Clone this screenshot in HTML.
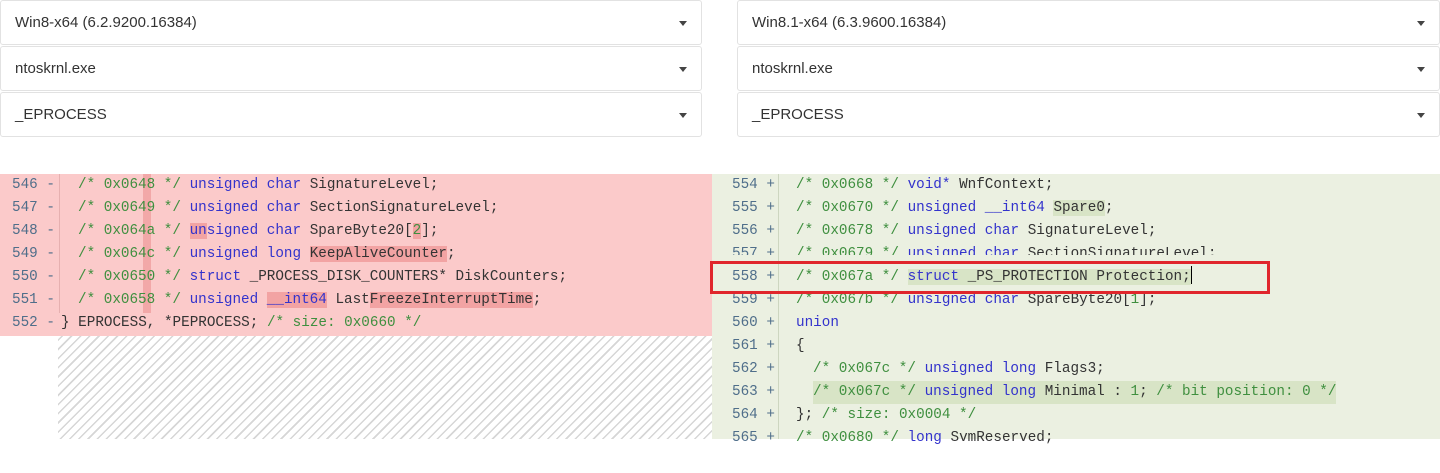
<!DOCTYPE html>
<html><head><style>
*{margin:0;padding:0;box-sizing:border-box}
body{width:1440px;height:439px;background:#fff;position:relative;overflow:hidden;font-family:"Liberation Sans",sans-serif}
.sel{position:absolute;height:45px;border:1px solid #e2e2e2;border-radius:3px;background:#fff;font-size:15px;color:#333;padding:13px 0 0 14px}
.sel:after{content:"";position:absolute;right:14px;top:20px;border-left:4px solid transparent;border-right:4px solid transparent;border-top:5px solid #444}
.code{font-family:"Liberation Mono",monospace;font-size:14.3px;white-space:pre;position:absolute;line-height:23px}
.ln{position:absolute;height:23px;width:100%}
.k{color:#3333cc}.c{color:#3f8f3f}.t{color:#333}
.n{color:#4f6e8a;position:absolute}
.hl{background:#f2a3a3}
.hg{background:#d8e4c6}
</style></head><body>
<div class="sel" style="left:0;top:0;width:702px">Win8-x64 (6.2.9200.16384)</div>
<div class="sel" style="left:0;top:46px;width:702px">ntoskrnl.exe</div>
<div class="sel" style="left:0;top:92px;width:702px">_EPROCESS</div>
<div class="sel" style="left:737px;top:0;width:703px">Win8.1-x64 (6.3.9600.16384)</div>
<div class="sel" style="left:737px;top:46px;width:703px">ntoskrnl.exe</div>
<div class="sel" style="left:737px;top:92px;width:703px">_EPROCESS</div>

<div style="position:absolute;left:0;top:174px;width:712px;height:162px;background:#fbcaca"></div>
<div style="position:absolute;left:58px;top:336px;width:654px;height:103px;background:repeating-linear-gradient(-45deg,#fff 0 5px,#d6d6d6 5px 6.5px)"></div>
<div style="position:absolute;left:59px;top:174px;width:1px;height:139px;background:#e6b0b0"></div>
<div style="position:absolute;left:143px;top:174px;width:8px;height:139px;background:#f2a8a8"></div>
<div style="position:absolute;left:712px;top:174px;width:728px;height:265px;background:#ebf0e1"></div>
<div style="position:absolute;left:778px;top:174px;width:1px;height:265px;background:#cdd6c0"></div>

<div class="code" style="left:0;top:174px;width:712px">
<div class="ln" style="top:0"><span class="n" style="left:12px">546 -</span><span style="position:absolute;left:78px"><span class="c">/* 0x0648 */</span> <span class="k">unsigned char</span> <span class="t">SignatureLevel;</span></span></div>
<div class="ln" style="top:23px"><span class="n" style="left:12px">547 -</span><span style="position:absolute;left:78px"><span class="c">/* 0x0649 */</span> <span class="k">unsigned char</span> <span class="t">SectionSignatureLevel;</span></span></div>
<div class="ln" style="top:46px"><span class="n" style="left:12px">548 -</span><span style="position:absolute;left:78px"><span class="c">/* 0x064a */</span> <span class="k"><span class="hl">un</span>signed char</span> <span class="t">SpareByte20[<span class="hl c">2</span>];</span></span></div>
<div class="ln" style="top:69px"><span class="n" style="left:12px">549 -</span><span style="position:absolute;left:78px"><span class="c">/* 0x064c */</span> <span class="k">unsigned long</span> <span class="t hl">KeepAliveCounter</span><span class="t">;</span></span></div>
<div class="ln" style="top:92px"><span class="n" style="left:12px">550 -</span><span style="position:absolute;left:78px"><span class="c">/* 0x0650 */</span> <span class="k">struct</span> <span class="t">_PROCESS_DISK_COUNTERS* DiskCounters;</span></span></div>
<div class="ln" style="top:115px"><span class="n" style="left:12px">551 -</span><span style="position:absolute;left:78px"><span class="c">/* 0x0658 */</span> <span class="k">unsigned <span class="hl">__int64</span></span> <span class="t">Last<span class="hl">FreezeInterruptTime</span>;</span></span></div>
<div class="ln" style="top:138px"><span class="n" style="left:12px">552 -</span><span style="position:absolute;left:61px"><span class="t">} EPROCESS, *PEPROCESS;</span> <span class="c">/* size: 0x0660 */</span></span></div>
</div>

<div class="code" style="left:712px;top:174px;width:728px">
<div class="ln" style="top:0"><span class="n" style="left:20px">554 +</span><span style="position:absolute;left:84px"><span class="c">/* 0x0668 */</span> <span class="k">void*</span> <span class="t">WnfContext;</span></span></div>
<div class="ln" style="top:23px"><span class="n" style="left:20px">555 +</span><span style="position:absolute;left:84px"><span class="c">/* 0x0670 */</span> <span class="k">unsigned __int64</span> <span class="t"><span class="hg">Spare0</span>;</span></span></div>
<div class="ln" style="top:46px"><span class="n" style="left:20px">556 +</span><span style="position:absolute;left:84px"><span class="c">/* 0x0678 */</span> <span class="k">unsigned char</span> <span class="t">SignatureLevel;</span></span></div>
<div class="ln" style="top:69px;height:12px;overflow:hidden"><span class="n" style="left:20px">557 +</span><span style="position:absolute;left:84px"><span class="c">/* 0x0679 */</span> <span class="k">unsigned char</span> <span class="t">SectionSignatureLevel;</span></span></div>
<div class="ln" style="top:92px"><span class="n" style="left:20px">558 +</span><span style="position:absolute;left:84px"><span class="c">/* 0x067a */</span> <span class="k hg">struct</span><span class="hg"> <span class="t">_PS_PROTECTION Protection;</span></span><span style="display:inline-block;width:1px;height:18px;background:#000;vertical-align:-4px"></span></span></div>
<div class="ln" style="top:115px"><span class="n" style="left:20px">559 +</span><span style="position:absolute;left:84px"><span class="c">/* 0x067b */</span> <span class="k">unsigned char</span> <span class="t">SpareByte20[<span class="c">1</span>];</span></span></div>
<div class="ln" style="top:138px"><span class="n" style="left:20px">560 +</span><span style="position:absolute;left:84px"><span class="k">union</span></span></div>
<div class="ln" style="top:161px"><span class="n" style="left:20px">561 +</span><span style="position:absolute;left:84px"><span class="t">{</span></span></div>
<div class="ln" style="top:184px"><span class="n" style="left:20px">562 +</span><span style="position:absolute;left:101px"><span class="c">/* 0x067c */</span> <span class="k">unsigned long</span> <span class="t">Flags3;</span></span></div>
<div class="ln" style="top:207px"><span class="n" style="left:20px">563 +</span><span style="position:absolute;left:101px" class="hg"><span class="c">/* 0x067c */</span> <span class="k">unsigned long</span> <span class="t">Minimal : <span class="c">1</span>;</span> <span class="c">/* bit position: 0 */</span></span></div>
<div class="ln" style="top:230px"><span class="n" style="left:20px">564 +</span><span style="position:absolute;left:84px"><span class="t">};</span> <span class="c">/* size: 0x0004 */</span></span></div>
<div class="ln" style="top:253px"><span class="n" style="left:20px">565 +</span><span style="position:absolute;left:84px"><span class="c">/* 0x0680 */</span> <span class="k">long</span> <span class="t">SvmReserved;</span></span></div>
</div>

<div style="position:absolute;left:710px;top:261px;width:560px;height:33px;border:3px solid #e0262c"></div>
</body></html>
